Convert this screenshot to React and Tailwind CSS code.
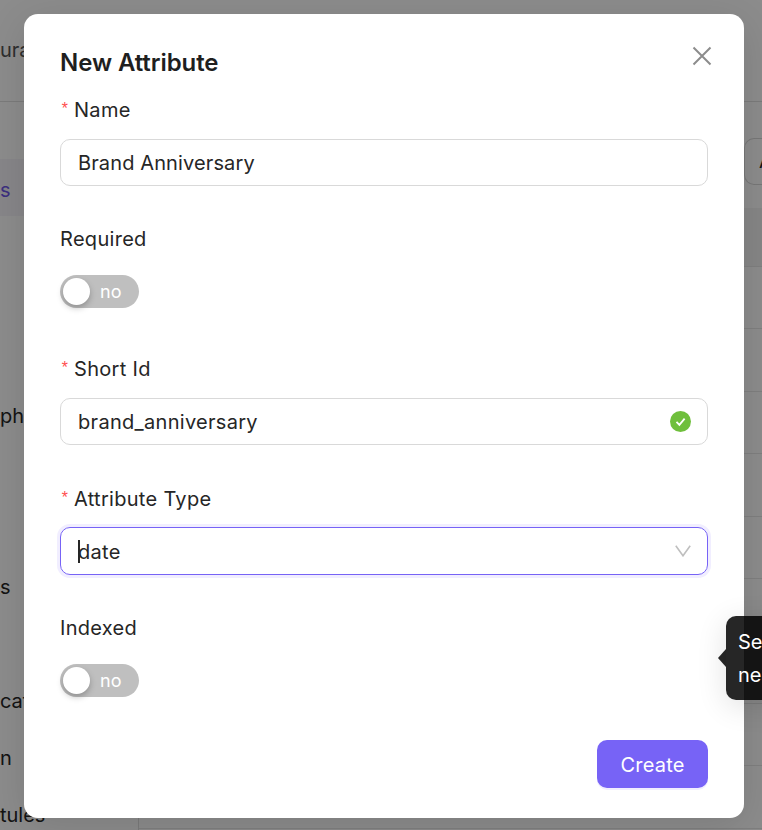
const sideItems = ['s', '', '', '', 'ph', '', '', 's', '', 'cati', 'n', 'tules'];
const tableRows = [0, 1, 2, 3, 4, 5, 6, 7, 8];

function Toggle() {
  return (
    <div className="flex h-[33px] w-[79px] items-center rounded-full bg-[#bfbfbf] pl-[3px]">
      <div className="h-[27px] w-[27px] rounded-full bg-white shadow-[0_3px_6px_rgba(0,0,0,0.25)]" />
      <span className="ml-[10px] text-[18px] leading-none text-white">no</span>
    </div>
  );
}

function Label({ children, required }) {
  return (
    <div className="flex h-[30px] items-center text-[20px] leading-[30px] tracking-[0.3px] text-[#262626]">
      {required && <span className="mr-[7px] w-[7px] text-[16px] leading-none text-[#ff4d4f] [font-family:'Liberation_Mono',monospace]">*</span>}
      {children}
    </div>
  );
}

function App() {
  return (
    <div className="relative h-[830px] w-[762px] overflow-hidden bg-white [font-family:Inter,sans-serif]">
      {/* Page behind the modal */}
      <div className="flex h-[102px] items-center border-b border-[#e0e0e0] pb-[2px] text-[20px] text-[#555]">ura</div>
      <div className="flex">
        <div className="w-[138px] shrink-0 pt-[57px]">
          {sideItems.map((item, idx) => (
            <div key={idx} className={idx === 0 ? 'h-[57px] bg-[#f6f5fa] pt-[16px] text-[20px] leading-[30px] text-[#6f56e8]' : 'h-[57px] pt-[14px] text-[20px] leading-[30px] text-[#262626]'}>
              {item}
            </div>
          ))}
        </div>
        <div className="flex-1 border-l border-[#e0e0e0]">
          <div className="flex justify-end pt-[36px]">
            <div className="h-[47px] w-[18px] rounded-l-[10px] border border-r-0 border-[#d9d9d9] pl-[14px] text-[20px] leading-[45px] text-[#262626]">A</div>
          </div>
          <div className="mt-[23px] h-[59px] border-b border-[#e8e8e8] bg-[#f5f5f5]" />
          {tableRows.map((row) => (
            <div key={row} className="h-[62.4px] border-b border-[#e8e8e8]" />
          ))}
        </div>
      </div>

      {/* Backdrop */}
      <div className="absolute inset-0 bg-black/45" />

      {/* Modal */}
      <div className="absolute left-[24px] top-[14px] h-[804px] w-[720px] rounded-[14px] bg-white px-[36px] pt-[33px] shadow-[0_8px_40px_rgba(0,0,0,0.12)]">
        <h1 className="text-[24px] font-semibold leading-[32px] tracking-[-0.08px] text-[#1f1f1f]">New Attribute</h1>
        <button className="absolute right-[32px] top-[32px] h-[20px] w-[20px] text-[#8c8c8c]">
          <svg width="20" height="20" viewBox="0 0 20 20" fill="none" stroke="currentColor" strokeWidth="2">
            <path d="M1.5 1.5 18.5 18.5M18.5 1.5 1.5 18.5" />
          </svg>
        </button>

        <div className="mt-[16px]">
          <Label required>Name</Label>
        </div>
        <div className="mt-[14px] flex h-[47px] items-center rounded-[10px] border border-[#d9d9d9] px-[17px] text-[20px] tracking-[0.12px] text-[#262626]">
          Brand Anniversary
        </div>

        <div className="mt-[38px]">
          <Label>Required</Label>
        </div>
        <div className="mt-[21px]">
          <Toggle />
        </div>

        <div className="mt-[46px]">
          <Label required>Short Id</Label>
        </div>
        <div className="mt-[14px] flex h-[47px] items-center justify-between rounded-[10px] border border-[#d9d9d9] pl-[17px] pr-[16px] text-[20px] tracking-[0.3px] text-[#262626]">
          brand_anniversary
          <svg width="21" height="21" viewBox="0 0 21 21">
            <circle cx="10.5" cy="10.5" r="10.5" fill="#6fbf3c" />
            <path d="M6.5 10.8 9.4 13.8 14.6 7.6" fill="none" stroke="#fff" strokeWidth="1.8" />
          </svg>
        </div>

        <div className="mt-[39px]">
          <Label required>Attribute Type</Label>
        </div>
        <div className="mt-[13px] flex h-[48px] items-center justify-between rounded-[10px] border border-[#7763f6] pl-[17px] pr-[16px] text-[20px] tracking-[0.3px] text-[#262626] shadow-[0_0_0_3px_#f1eeff]">
          <span className="flex items-center pt-[1px]">
            <span className="-mr-[2px] h-[23px] w-[2px] bg-[#262626]" />
            date
          </span>
          <svg width="16" height="12" viewBox="0 0 16 12" fill="none" stroke="#bfbfbf" strokeWidth="1.6">
            <path d="M.8.8 8 10.8 15.2.8" />
          </svg>
        </div>

        <div className="mt-[38px]">
          <Label>Indexed</Label>
        </div>
        <div className="mt-[21px]">
          <Toggle />
        </div>

        <div className="mt-[43px] flex justify-end">
          <button className="h-[48px] w-[111px] rounded-[10px] bg-[#7763f6] pt-[1px] text-[20px] tracking-[0.2px] text-white shadow-[0_2px_0_#f1eeff]">Create</button>
        </div>
      </div>

      {/* Tooltip */}
      <div className="absolute left-[726px] top-[616px] h-[84px] w-[200px] rounded-[10px] bg-black/85 pl-[12px] pt-[10px] text-[20px] leading-[33px] text-white shadow-[0_6px_30px_rgba(0,0,0,0.12)]">
        <div>Se</div>
        <div>ne</div>
        <div className="absolute -left-[8px] top-[33px] h-0 w-0 border-y-[9px] border-r-[8px] border-y-transparent border-r-black/85" />
      </div>
    </div>
  );
}

export default App;
